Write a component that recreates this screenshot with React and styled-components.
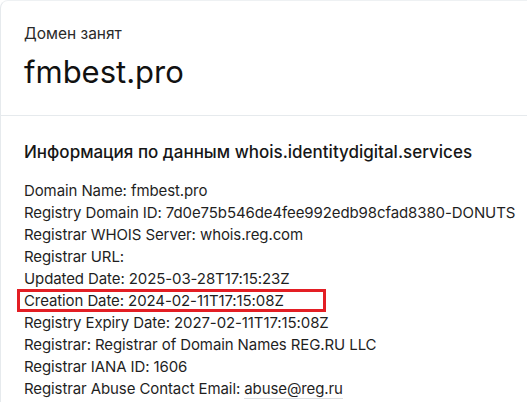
import React from "react";
import styled, { createGlobalStyle } from "styled-components";

const Global = createGlobalStyle`
  html, body { margin: 0; padding: 0; background: #fff; }
  body { font-family: Inter, "Noto Sans", sans-serif; color: #1f1f1f; }
  * { box-sizing: border-box; }
`;

const Card = styled.div`
  width: calc(100% + 12px);
  height: 402px;
  border-left: 1px solid #e6eaed;
  border-top: 1px solid #eef1f3;
  border-top-left-radius: 8px;
  background: #fff;
  overflow: hidden;
`;

const Header = styled.section`
  padding: 23px 24px 25px 23px;
  display: flex;
  flex-direction: column;
  gap: 10px;
`;

const Status = styled.div`
  font-size: 15.5px;
  line-height: 20px;
  color: #2a2a2a;
`;

const Domain = styled.h1`
  margin: 0;
  font-size: 31px;
  line-height: 36px;
  font-weight: 400;
  color: #111;
`;

const Body = styled.section`
  border-top: 1px solid #e6eaed;
  padding: 24px 24px 0 23px;
`;

const Heading = styled.h2`
  margin: 0 0 16px;
  font-size: 17px;
  line-height: 24px;
  font-weight: 500;
  color: #161616;
`;

const Lines = styled.div`
  display: flex;
  flex-direction: column;
  font-size: 15px;
  line-height: 22px;
  letter-spacing: -0.1px;
  color: #1f1f1f;
`;

const Line = styled.div`
  position: relative;
  white-space: nowrap;
`;

const Highlight = styled.span`
  position: absolute;
  left: -7px;
  top: -1px;
  width: 309px;
  height: 23px;
  border: 3px solid #e31e24;
  pointer-events: none;
`;

const Mail = styled.a`
  color: inherit;
  text-decoration: none;
  border-bottom: 1px solid #dcdfe2;
`;

const rows = [
  "Domain Name: fmbest.pro",
  "Registry Domain ID: 7d0e75b546de4fee992edb98cfad8380-DONUTS",
  "Registrar WHOIS Server: whois.reg.com",
  "Registrar URL:",
  "Updated Date: 2025-03-28T17:15:23Z",
  "Creation Date: 2024-02-11T17:15:08Z",
  "Registry Expiry Date: 2027-02-11T17:15:08Z",
  "Registrar: Registrar of Domain Names REG.RU LLC",
  "Registrar IANA ID: 1606",
];

export default function App() {
  return (
    <>
      <Global />
      <Card>
        <Header>
          <Status>Домен занят</Status>
          <Domain>fmbest.pro</Domain>
        </Header>
        <Body>
          <Heading>Информация по данным whois.identitydigital.services</Heading>
          <Lines>
            {rows.map((r) => (
              <Line key={r}>
                {r}
                {r.startsWith("Creation") && <Highlight />}
              </Line>
            ))}
            <Line>
              Registrar Abuse Contact Email: <Mail href="#">abuse@reg.ru</Mail>
            </Line>
          </Lines>
        </Body>
      </Card>
    </>
  );
}
